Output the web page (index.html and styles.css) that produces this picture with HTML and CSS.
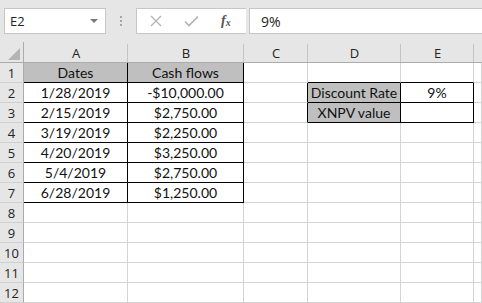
FILE: index.html
```
<!DOCTYPE html>
<html>
<head>
<meta charset="utf-8">
<link rel="stylesheet" href="styles.css">
</head>
<body>
<div class="app">
  <div class="toolbar">
    <div class="namebox"><span class="nb-text">E2</span><span class="nb-arrow"></span></div>
    <div class="dots"><span></span><span></span><span></span></div>
    <div class="fbtns">
      <svg class="ic ic-x" width="12" height="12" viewBox="0 0 12 12"><path d="M1 1L11 11M11 1L1 11" stroke="#b3b3b3" stroke-width="1.3" fill="none"/></svg>
      <svg class="ic ic-check" width="15" height="12" viewBox="0 0 15 12"><path d="M1 6.5L5 10.5L14 1.5" stroke="#b3b3b3" stroke-width="1.6" fill="none"/></svg>
      <span class="fx">f<sub>x</sub></span>
    </div>
    <div class="finput">9%</div>
  </div>
  <div class="grid">
    <div class="corner"><span class="tri"></span></div>
    <div class="ch">A</div><div class="ch">B</div><div class="ch">C</div><div class="ch">D</div><div class="ch">E</div><div class="ch last"></div>

    <div class="rh">1</div>
    <div class="c hd br bb">Dates</div><div class="c hd br bb">Cash flows</div><div class="c"></div><div class="c bb"></div><div class="c bb"></div><div class="c"></div>

    <div class="rh">2</div>
    <div class="c br bb">1/28/2019</div><div class="c br bb">-$10,000.00</div><div class="c br"></div><div class="c hd br bb">Discount Rate</div><div class="c br bb">9%</div><div class="c"></div>

    <div class="rh">3</div>
    <div class="c br bb">2/15/2019</div><div class="c br bb">$2,750.00</div><div class="c br"></div><div class="c hd br bb">XNPV value</div><div class="c br bb"></div><div class="c"></div>

    <div class="rh">4</div>
    <div class="c br bb">3/19/2019</div><div class="c br bb">$2,250.00</div><div class="c"></div><div class="c"></div><div class="c"></div><div class="c"></div>

    <div class="rh">5</div>
    <div class="c br bb">4/20/2019</div><div class="c br bb">$3,250.00</div><div class="c"></div><div class="c"></div><div class="c"></div><div class="c"></div>

    <div class="rh">6</div>
    <div class="c br bb">5/4/2019</div><div class="c br bb">$2,750.00</div><div class="c"></div><div class="c"></div><div class="c"></div><div class="c"></div>

    <div class="rh">7</div>
    <div class="c br bb">6/28/2019</div><div class="c br bb">$1,250.00</div><div class="c"></div><div class="c"></div><div class="c"></div><div class="c"></div>

    <div class="rh">8</div>
    <div class="c"></div><div class="c"></div><div class="c"></div><div class="c"></div><div class="c"></div><div class="c"></div>

    <div class="rh">9</div>
    <div class="c"></div><div class="c"></div><div class="c"></div><div class="c"></div><div class="c"></div><div class="c"></div>

    <div class="rh">10</div>
    <div class="c"></div><div class="c"></div><div class="c"></div><div class="c"></div><div class="c"></div><div class="c"></div>

    <div class="rh">11</div>
    <div class="c"></div><div class="c"></div><div class="c"></div><div class="c"></div><div class="c"></div><div class="c"></div>

    <div class="rh">12</div>
    <div class="c"></div><div class="c"></div><div class="c"></div><div class="c"></div><div class="c"></div><div class="c"></div>
  </div>
</div>
</body>
</html>
```
FILE: styles.css
```
* { box-sizing: border-box; }
html, body { margin: 0; padding: 0; }
body { width: 482px; height: 303px; overflow: hidden; background: #fff; font-family: "Open Sans", "Noto Sans", sans-serif; }
.app { width: 482px; }
.toolbar {
  height: 42px;
  background: #e6e6e6;
  display: flex;
  align-items: flex-start;
  padding-top: 8px;
  padding-left: 4px;
}
.namebox {
  width: 102px; height: 26px;
  background: #fff;
  border: 1px solid #c6c6c6;
  display: flex; align-items: center; justify-content: space-between;
  padding: 0 7px 0 5px;
  font-size: 13px; color: #222;
}
.nb-arrow {
  width: 0; height: 0;
  border-left: 4px solid transparent; border-right: 4px solid transparent;
  border-top: 4px solid #7a7a7a;
}
.dots {
  width: 30px; height: 26px;
  display: flex; flex-direction: column; align-items: center; justify-content: center; gap: 2px;
}
.dots span { width: 2px; height: 2px; background: #a6a6a6; display: block; }
.fbtns {
  width: 110px; height: 26px;
  background: #fff;
  border: 1px solid #c6c6c6;
  border-right: none;
  display: flex; align-items: center;
  padding-left: 13px;
}
.ic-x { margin-right: 22px; }
.ic-check { margin-right: 22px; }
.fx { font-family: "Liberation Serif", serif; font-style: italic; font-size: 14px; color: #555; font-weight: bold; }
.fx sub { font-size: 10px; vertical-align: -1px; }
.finput {
  margin-left: 3px;
  flex: 1; height: 26px;
  background: #fff;
  border: 1px solid #c6c6c6;
  border-right: none;
  display: flex; align-items: center;
  padding-left: 11px;
  font-size: 14px; color: #222;
}
.grid {
  display: grid;
  grid-template-columns: 24px 104px 116px 64px 93px 73px 8px;
  grid-template-rows: 21px repeat(12, 20px);
}
.corner {
  background: #e6e6e6;
  border-right: 1px solid #ababab;
  border-bottom: 1px solid #ababab;
  position: relative;
}
.tri {
  position: absolute; right: 3px; bottom: 2px;
  width: 0; height: 0;
  border-left: 12px solid transparent;
  border-bottom: 12px solid #b4b4b4;
}
.ch {
  background: #e6e6e6;
  border-bottom: 1px solid #ababab;
  font-size: 13px; color: #222;
  display: flex; align-items: center; justify-content: center;
  position: relative;
  padding-top: 1px;
}
.ch::after {
  content: ""; position: absolute; right: 0; top: 2px; bottom: 0; width: 1px; background: #c4c4c4;
}
.ch.last::after { display: none; }
.rh {
  background: #e6e6e6;
  border-right: 1px solid #ababab;
  border-bottom: 1px solid #d0d0d0;
  font-size: 13px; color: #222;
  display: flex; align-items: center; justify-content: center;
}
.c {
  border-right: 1px solid #d4d4d4;
  border-bottom: 1px solid #d4d4d4;
  font-family: "Lato", sans-serif;
  font-size: 14px; color: #111;
  display: flex; align-items: center; justify-content: center;
  white-space: nowrap;
}
.c.hd { background: #bfbfbf; }
.c.br { border-right-color: #000; }
.c.bb { border-bottom-color: #000; }
```
